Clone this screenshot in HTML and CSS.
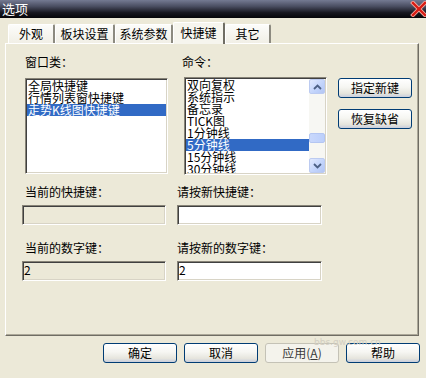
FILE: index.html
```html
<!DOCTYPE html>
<html lang="zh-CN">
<head>
    <meta charset="UTF-8">
    <title>选项</title>
    <link rel="stylesheet" href="styles.css">
</head>
<body>
    <div class="dialog">
        <div class="titlebar">
            <span class="title">选项</span>
            <svg class="close" width="18" height="16" viewBox="0 0 18 16">
                <path d="M3 2 L15 14 M15 2 L3 14" stroke="#f4b0a8" stroke-width="4" stroke-linecap="square"/>
                <path d="M3 2 L15 14 M15 2 L3 14" stroke="#d81c14" stroke-width="2.4" stroke-linecap="square"/>
            </svg>
        </div>

        <div class="content">
            <div class="tabs">
                <div class="tab tab-look">外观</div>
                <div class="tab tab-block">板块设置</div>
                <div class="tab tab-params">系统参数</div>
                <div class="tab tab-keys active">快捷键</div>
                <div class="tab tab-other">其它</div>
            </div>

            <div class="panel">
                <div class="group group-window">
                    <div class="label">窗口类：</div>
                    <ul class="listbox list-window">
                        <li>全局快捷键</li>
                        <li>行情列表窗快捷键</li>
                        <li class="selected">走势K线图快捷键</li>
                    </ul>
                </div>

                <div class="group group-cmd">
                    <div class="label">命令：</div>
                    <div class="listbox list-cmd">
                        <ul class="items">
                            <li>双向复权</li>
                            <li>系统指示</li>
                            <li>备忘录</li>
                            <li>TICK图</li>
                            <li>1分钟线</li>
                            <li class="selected">5分钟线</li>
                            <li>15分钟线</li>
                            <li>30分钟线</li>
                        </ul>
                        <div class="scrollbar">
                            <div class="sb-btn">
                                <svg width="9" height="6" viewBox="0 0 9 6"><path d="M1 5 L4.5 1.5 L8 5" fill="none" stroke="#4d6185" stroke-width="1.8"/></svg>
                            </div>
                            <div class="sb-track"><div class="sb-thumb"></div></div>
                            <div class="sb-btn">
                                <svg width="9" height="6" viewBox="0 0 9 6"><path d="M1 1 L4.5 4.5 L8 1" fill="none" stroke="#4d6185" stroke-width="1.8"/></svg>
                            </div>
                        </div>
                    </div>
                </div>

                <div class="side-buttons">
                    <button class="xp-btn">指定新键</button>
                    <button class="xp-btn">恢复缺省</button>
                </div>

                <div class="field field-left">
                    <div class="label">当前的快捷键：</div>
                    <div class="textbox disabled"></div>
                </div>
                <div class="field field-right">
                    <div class="label">请按新快捷键：</div>
                    <div class="textbox"></div>
                </div>

                <div class="field field-left">
                    <div class="label">当前的数字键：</div>
                    <div class="textbox disabled">2</div>
                </div>
                <div class="field field-right">
                    <div class="label">请按新的数字键：</div>
                    <div class="textbox">2</div>
                </div>
            </div>

            <div class="footer">
                <button class="xp-btn">确定</button>
                <button class="xp-btn">取消</button>
                <button class="xp-btn disabled">应用(<u>A</u>)</button>
                <button class="xp-btn">帮助</button>
            </div>
        </div>

        <div class="watermark">bbs.gw.com.cn</div>
    </div>
</body>
</html>
```

FILE: styles.css
```css
* {
    box-sizing: border-box;
}
html, body {
    margin: 0;
    padding: 0;
    overflow: hidden;
}
body {
    font-family: "Noto Sans CJK SC", "DejaVu Sans", sans-serif;
    font-size: 12px;
    color: #000;
    background-color: #ece9d8;
}
.dialog {
    position: relative;
    width: 426px;
    height: 378px;
    background-color: #ece9d8;
    display: flex;
    flex-direction: column;
}
.titlebar {
    height: 18px;
    display: flex;
    justify-content: space-between;
    align-items: center;
    padding-left: 2px;
    background: linear-gradient(#747a92, #4a4e62 35%, #17171f 70%, #050508);
    color: #fff;
}
.title {
    font-size: 13px;
    line-height: 16px;
}
.close {
    margin-right: -2px;
}
.content {
    padding: 4px 0 0 5px;
}

/* tabs */
.tabs {
    display: flex;
    align-items: flex-end;
    height: 21px;
    margin-left: 3px;
}
.tab {
    height: 19px;
    line-height: 18px;
    text-align: center;
    background: linear-gradient(#fcfcfa, #f1efe6);
    border-top: 1px solid #fff;
    border-left: 1px solid #fff;
    border-right: 2px solid #8c8a80;
    border-radius: 2px 2px 0 0;
}
.tab-look { width: 47px; }
.tab-block { width: 60px; }
.tab-params { width: 58px; }
.tab-keys { width: 52px; }
.tab-other { width: 46px; }
.tab.active {
    height: 22px;
    line-height: 19px;
    margin-bottom: -1px;
    background: #f6f5ee;
    border-right: 2px solid #6f6d64;
    position: relative;
    z-index: 1;
}

/* panel */
.panel {
    width: 414px;
    height: 293px;
    border-top: 1px solid #fff;
    border-left: 1px solid #fff;
    border-right: 1px solid #6f6d64;
    border-bottom: 1px solid #6f6d64;
    box-shadow: inset -1px -1px 0 #aca899;
    padding: 11px 0 0 16px;
    display: grid;
    grid-template-columns: 155px 161px 74px;
    grid-template-rows: 130px 56px auto;
    align-content: start;
}
.label {
    line-height: 14px;
    white-space: nowrap;
}
.group-window .label {
    margin-left: 3px;
}
.group-cmd .label {
    margin-left: 5px;
}
.listbox {
    margin: 0;
    padding: 0;
    list-style: none;
    background-color: #fff;
    border-top: 1px solid #878377;
    border-left: 1px solid #878377;
    border-right: 1px solid #fff;
    border-bottom: 1px solid #fff;
    box-shadow: inset 1px 1px 0 #404040, inset -1px -1px 0 #d8d4c6;
    padding: 1px;
}
.listbox li,
.items li {
    line-height: 12px;
    height: 12px;
    padding-left: 1px;
    white-space: nowrap;
}
.listbox li.selected,
.items li.selected {
    background-color: #316ac5;
    color: #fff;
}
.list-window {
    margin: 9px 0 0 3px;
    width: 143px;
    height: 96px;
}
.list-cmd {
    margin: 8px 0 0 7px;
    width: 143px;
    height: 98px;
    display: flex;
}
.items {
    list-style: none;
    margin: 0;
    padding: 0;
    flex: 1;
    overflow: hidden;
}

/* scrollbar */
.scrollbar {
    width: 16px;
    display: flex;
    flex-direction: column;
    background-color: #f7f7f3;
}
.sb-btn {
    height: 15px;
    display: flex;
    align-items: center;
    justify-content: center;
    border: 1px solid #bccbf1;
    border-radius: 2px;
    background: linear-gradient(135deg, #e2eafe, #c1d3fb 60%, #b3c6f4);
}
.sb-track {
    flex: 1;
    padding-top: 39px;
}
.sb-thumb {
    height: 10px;
    border: 1px solid #b4c6f2;
    border-radius: 2px;
    background: linear-gradient(90deg, #c9d8fc, #bccffb);
}

/* buttons */
.side-buttons {
    padding-top: 23px;
    display: flex;
    flex-direction: column;
    gap: 11px;
}
.xp-btn {
    width: 74px;
    height: 20px;
    padding: 0;
    font-family: "Noto Sans CJK SC", "DejaVu Sans", sans-serif;
    font-size: 12px;
    line-height: 16px;
    color: #000;
    border: 1px solid #003c74;
    border-radius: 3px;
    background: linear-gradient(#ffffff, #f6f6f2 45%, #e6e5dd 80%, #c9cedc);
}
.xp-btn.disabled {
    color: #3a3a3a;
    border-color: #c4c2b6;
    background: #f4f3ec;
}

/* text fields */
.field-left {
    grid-column: 1;
}
.field-right {
    grid-column: 2;
}
.field-left .label {
    margin-left: 3px;
}
.textbox {
    margin-top: 6px;
    height: 20px;
    width: 144px;
    padding-left: 1px;
    line-height: 16px;
    background-color: #fff;
    border-top: 1px solid #878377;
    border-left: 1px solid #878377;
    border-right: 1px solid #fff;
    border-bottom: 1px solid #fff;
    box-shadow: inset 1px 1px 0 #404040, inset -1px -1px 0 #d8d4c6;
}
.field-right .textbox {
    width: 145px;
}
.textbox.disabled {
    background-color: #ece9d8;
}

.footer {
    display: flex;
    gap: 7px;
    margin: 7px 0 0 98px;
}

.watermark {
    position: absolute;
    left: 314px;
    top: 337px;
    font-family: "DejaVu Sans", sans-serif;
    font-size: 9px;
    line-height: 10px;
    color: #d2cec2;
}
```
